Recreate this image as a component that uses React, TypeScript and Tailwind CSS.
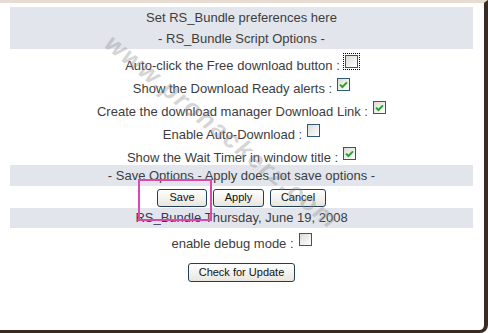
import type { ReactNode } from 'react';

function Box({ checked, focused }: { checked?: boolean; focused?: boolean }) {
  return (
    <span
      className={
        'ml-[5px] mb-[5px] inline-flex h-[13px] w-[13px] shrink-0 items-center justify-center border border-[#2f5a74] bg-gradient-to-br from-[#dcdcd6] to-white ' +
        (focused ? 'outline outline-1 outline-dotted outline-offset-[1px] outline-black from-[#c9dcef] to-[#f4f8fc]' : '')
      }
    >
      {checked && (
        <svg width="9" height="8" viewBox="0 0 9 8">
          <path d="M1 3.6 L3.4 6 L8 1.4" fill="none" stroke="#2aa32a" strokeWidth="2" />
        </svg>
      )}
    </span>
  );
}

function Row({ label, checked, focused }: { label: string; checked?: boolean; focused?: boolean }) {
  return (
    <div className="flex h-[23px] items-end justify-center">
      <span className="leading-[15px]">{label}</span>
      <Box checked={checked} focused={focused} />
    </div>
  );
}

function Band({ children, h = 'h-[21px]' }: { children: ReactNode; h?: string }) {
  return <div className={`flex ${h} items-center justify-center bg-[#e2e5eb]`}>{children}</div>;
}

function Btn({ children, w }: { children: ReactNode; w: string }) {
  return (
    <button
      className={`${w} h-[18px] rounded-[3px] border border-[#1f3f5c] bg-gradient-to-b from-white to-[#e8e6dc] text-[11px] leading-none text-[#111]`}
    >
      {children}
    </button>
  );
}

export default function App() {
  return (
    <div className="relative h-[333px] w-[488px] overflow-hidden bg-white font-['Liberation_Sans',Arial,sans-serif] text-[13px] text-[#3d3d3d]">
      <div className="flex h-full flex-col rounded-br-[8px] border-t-[3px] border-r-[4px] border-b-[3px] border-t-[#e8dcd2] border-r-[#3b2a20] border-b-[#3b2a20] pt-[4px] pl-[10px] pr-[11px]">
        <div className="flex flex-col bg-[#e2e5eb]">
          <div className="flex h-[21px] items-center justify-center">Set RS_Bundle preferences here</div>
          <div className="flex h-[21px] items-center justify-center">- RS_Bundle Script Options -</div>
        </div>
        <div className="mt-[1px]">
          <Row label="Auto-click the Free download button :" focused />
          <Row label="Show the Download Ready alerts :" checked />
          <Row label="Create the download manager Download Link :" checked />
          <Row label="Enable Auto-Download :" />
          <Row label="Show the Wait Timer in window title :" checked />
        </div>
        <Band>- Save Options - Apply does not save options -</Band>
        <div className="flex h-[22px] items-center justify-center gap-[6px] pt-[1px]">
          <Btn w="w-[50px]">Save</Btn>
          <Btn w="w-[51px]">Apply</Btn>
          <Btn w="w-[56px]">Cancel</Btn>
        </div>
        <Band h="h-[20px]">
          <span className="text-[#3a3560]">RS_Bundle</span>&nbsp;Thursday, June 19, 2008
        </Band>
        <Row label="enable debug mode :" />
        <div className="mt-[12px] flex justify-center">
          <Btn w="w-[107px] h-[19px]">Check for Update</Btn>
        </div>
      </div>

      <div className="pointer-events-none absolute top-[179px] left-[138px] h-[42px] w-[74px] border-2 border-[#dc4aa8]" />

      <div className="pointer-events-none absolute top-[113px] left-[62px] w-[320px] rotate-[39deg] text-center text-[25px] font-bold italic tracking-[2px] whitespace-nowrap text-[#8a8a8a] opacity-35">
        www.prohackerz.com
      </div>
    </div>
  );
}
